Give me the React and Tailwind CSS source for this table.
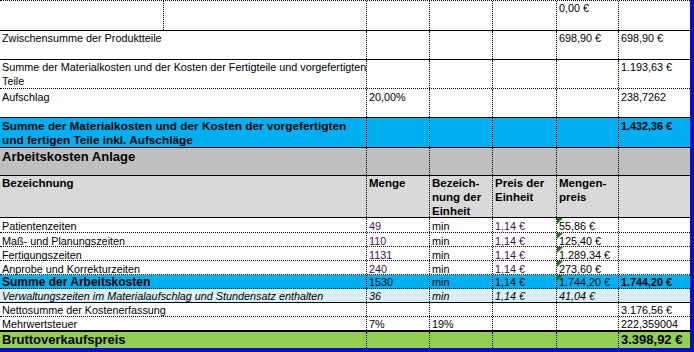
import React from "react";

// column widths incl. the dotted right border
const COLS = ["w-[367px]", "w-[63px]", "w-[63px]", "w-[64px]", "w-[62px]", "w-[71px]"];
const TOP_COLS = ["w-[164px]", "w-[203px]", "w-[63px]", "w-[63px]", "w-[64px]", "w-[62px]", "w-[71px]"];

const PURPLE = "text-[#460c52]";

function Flag() {
  return (
    <span className="absolute left-0 top-0 h-0 w-0 border-t-[6px] border-r-[6px] border-t-[#0f7f12] border-r-transparent" />
  );
}

function Row({ className = "", cells, widths = COLS, cellClass = "" }) {
  return (
    <div className={`flex ${className}`}>
      {cells.map((c, i) => (
        <div
          key={i}
          className={`relative shrink-0 whitespace-nowrap px-[2px] ${widths[i]} ${
            i < widths.length - 1 ? "border-r border-dotted border-black" : ""
          } ${cellClass}`}
        >
          {c}
        </div>
      ))}
    </div>
  );
}

const B = ({ children, className = "" }) => <span className={`font-bold ${className}`}>{children}</span>;

export default function App() {
  const data = [
    ["Patientenzeiten", "49", "55,86 €"],
    ["Maß- und Planungszeiten", "110", "125,40 €"],
    ["Fertigungszeiten", "1131", "1.289,34 €"],
    ["Anprobe und Korrekturzeiten", "240", "273,60 €"],
  ];

  return (
    <div className="w-[694px] h-[352px] overflow-hidden bg-white border-r-4 border-b-4 border-[#0a0ad0] font-['Liberation_Sans',Arial,sans-serif] text-black text-[10.8px]">
      {/* Produktteile */}
      <Row
        className="h-[31px] border-t border-b border-black [border-top-style:dotted]"
        widths={TOP_COLS}
        cellClass="leading-[14px]"
        cells={["", "", "", "", "", "0,00 €", ""]}
      />
      <Row
        className="h-[29px] border-b border-black"
        cellClass="leading-[14px]"
        cells={["Zwischensumme der Produktteile", "", "", "", "698,90 €", "698,90 €"]}
      />
      <Row
        className="h-[29px] border-b border-dotted border-black"
        cellClass="leading-[14px]"
        cells={[
          <>
            Summe der Materialkosten und der Kosten der Fertigteile und vorgefertigten
            <br />
            Teile
          </>,
          "",
          "",
          "",
          "",
          "1.193,63 €",
        ]}
      />
      <Row
        className="h-[29px] border-b border-black"
        cellClass="leading-[14px] pt-[1px]"
        cells={["Aufschlag", "20,00%", "", "", "", "238,7262"]}
      />
      <Row
        className="h-[30px] border-b border-black bg-[#00b0f0]"
        cellClass="leading-[14px] pt-[1px]"
        cells={[
          <B className="text-[11.8px]">
            Summe der Materialkosten und der Kosten der vorgefertigten
            <br />
            und fertigen Teile inkl. Aufschläge
          </B>,
          "",
          "",
          "",
          "",
          <B>1.432,36 €</B>,
        ]}
      />

      {/* Arbeitskosten */}
      <Row
        className="h-[28px] border-b border-black bg-[#c0c0c0]"
        cellClass="leading-[16px] pt-[1px]"
        cells={[<B className="text-[13px]">Arbeitskosten Anlage</B>, "", "", "", "", ""]}
      />
      <Row
        className="h-[42px] border-b border-black bg-[#d9d9d9]"
        cellClass="leading-[14px] font-bold text-[11.5px]"
        cells={[
          "Bezeichnung",
          "Menge",
          <>
            Bezeich-
            <br />
            nung der
            <br />
            Einheit
          </>,
          <>
            Preis der
            <br />
            Einheit
          </>,
          <>
            Mengen-
            <br />
            preis
          </>,
          "",
        ]}
      />
      {data.map(([label, qty, total], i) => (
        <Row
          key={label}
          className={`${i === 0 ? "h-[15px]" : "h-[14px]"} border-b border-dotted border-black`}
          cellClass="leading-[12px] pt-[2px]"
          cells={[
            label,
            <span className={PURPLE}>{qty}</span>,
            "min",
            <span className={PURPLE}>1,14 €</span>,
            <>
              <Flag />
              {total}
            </>,
            "",
          ]}
        />
      ))}
      <Row
        className="h-[14px] border-b border-dotted border-black bg-[#00b0f0]"
        cellClass="leading-[12px] pt-[1px]"
        cells={[
          <B className="text-[12px]">Summe der Arbeitskosten</B>,
          "1530",
          "min",
          "1,14 €",
          <>
            <Flag />
            1.744,20 €
          </>,
          <B>1.744,20 €</B>,
        ]}
      />
      <Row
        className="h-[14px] border-b border-black bg-[#daeef3]"
        cellClass="leading-[12px] pt-[1px] italic"
        cells={[
          "Verwaltungszeiten im Materialaufschlag und Stundensatz enthalten",
          "36",
          "min",
          "1,14 €",
          "41,04 €",
          "",
        ]}
      />
      <Row
        className="h-[14px] border-b border-dotted border-black"
        cellClass="leading-[12px] pt-[1px]"
        cells={["Nettosumme der Kostenerfassung", "", "", "", "", "3.176,56 €"]}
      />
      <Row
        className="h-[15px] border-b-2 border-black"
        cellClass="leading-[12px] pt-[1px]"
        cells={["Mehrwertsteuer", "7%", "19%", "", "", "222,359004"]}
      />
      <Row
        className="h-[16px] bg-[#92d050]"
        cellClass="leading-[16px]"
        cells={[
          <B className="text-[13px]">Bruttoverkaufspreis</B>,
          "",
          "",
          "",
          "",
          <B className="text-[13px]">3.398,92 €</B>,
        ]}
      />
    </div>
  );
}
